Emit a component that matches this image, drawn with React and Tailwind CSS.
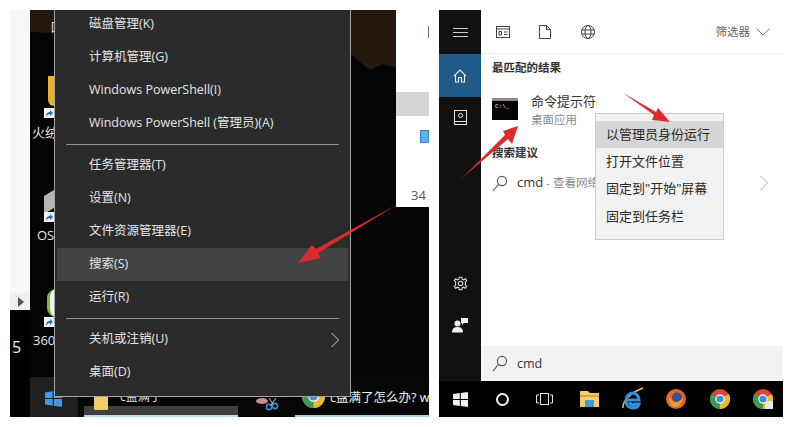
import React from "react";

const font = "font-['Open_Sans','Noto_Sans_CJK_SC',sans-serif]";

function Chrome({ size = 20, className = "" }) {
  return (
    <svg width={size} height={size} viewBox="0 0 24 24" className={className}>
      <circle cx="12" cy="12" r="12" fill="#d9453a" />
      <path d="M12 12 L1.6 6 A12 12 0 0 0 12 24 Z" fill="#3b9c4f" />
      <path d="M12 12 L12 24 A12 12 0 0 0 22.4 6 Z" fill="#e8bb2a" />
      <circle cx="12" cy="12" r="5.6" fill="#fff" />
      <circle cx="12" cy="12" r="4.3" fill="#4a88e0" />
    </svg>
  );
}

function Shortcut() {
  return (
    <svg width="10" height="10" viewBox="0 0 10 10">
      <rect width="10" height="10" fill="#f0f0f0" />
      <path d="M2 8.5 C2 5 4 4 6 4 L6 2 L9 5 L6 8 L6 6 C4.5 6 3 7 2 8.5Z" fill="#2a6fb5" />
    </svg>
  );
}

function Search({ className = "" }) {
  return (
    <svg width="16" height="17" viewBox="0 0 16 17" fill="none" stroke="#555" strokeWidth="1.1" className={className}>
      <circle cx="10" cy="6" r="4.6" />
      <path d="M6.6 9.4 L1 16" />
    </svg>
  );
}

function Chevron() {
  return (
    <svg width="10" height="16" viewBox="0 0 10 16" fill="none" stroke="currentColor" strokeWidth="1">
      <path d="M1.5 1 L8.5 8 L1.5 15" />
    </svg>
  );
}

const menuA = ["磁盘管理(K)", "计算机管理(G)", "Windows PowerShell(I)", "Windows PowerShell (管理员)(A)"];
const menuB = ["任务管理器(T)", "设置(N)", "文件资源管理器(E)", "搜索(S)", "运行(R)"];

function MenuItem({ label, hover, arrow }) {
  return (
    <div className={`h-[33px] shrink-0 flex items-center justify-between pl-[32px] pr-[8px] mx-[2px] text-[12.5px] text-[#e4e4e4] ${hover ? "bg-[#424242]" : ""}`}>
      <span>{label}</span>
      {arrow && <span className="text-[#cfcfcf]"><Chevron /></span>}
    </div>
  );
}

function Sep() {
  return (
    <div className="h-[9px] shrink-0 flex items-center px-[11px]">
      <div className="h-px w-full bg-[#8f8f8f]" />
    </div>
  );
}

function WinMenu() {
  return (
    <div className="absolute left-[44px] top-0 w-[297px] h-[387px] bg-[#2b2b2b] border-x border-b border-[#a3a3a3] overflow-hidden">
      <div className="flex flex-col -mt-[2px]">
        {menuA.map((m) => <MenuItem key={m} label={m} />)}
        <Sep />
        {menuB.map((m) => <MenuItem key={m} label={m} hover={m === "搜索(S)"} />)}
        <Sep />
        <MenuItem label="关机或注销(U)" arrow />
        <MenuItem label="桌面(D)" />
      </div>
    </div>
  );
}

function DesktopIcons() {
  return (
    <>
      <span className="absolute left-[21px] top-[12px] text-[12px] text-[#e8e8e8] leading-none">回</span>
      <div className="absolute left-[18px] top-[66px] w-[7px] h-[30px] bg-[#eeb02c] rounded-bl-[6px]" />
      <div className="absolute left-[14px] top-[98px]"><Shortcut /></div>
      <span className="absolute left-[2px] top-[113px] text-[13px] leading-[18px] text-[#e8e8e8] whitespace-nowrap">火绒</span>
      <div className="absolute left-[14px] top-[183px] w-[10px] h-[18px] bg-[#b5b5b5] skew-y-[-30deg]" />
      <div className="absolute left-[14px] top-[202px]"><Shortcut /></div>
      <span className="absolute left-[7px] top-[216px] text-[13px] leading-[18px] text-[#e8e8e8]">OS</span>
      <div className="absolute left-[17px] top-[279px] w-[18px] h-[28px] rounded-full bg-[#f2f2f2] border-l-[3px] border-[#7bb93a]" />
      <div className="absolute left-[14px] top-[307px]"><Shortcut /></div>
      <span className="absolute left-[3px] top-[321px] text-[13px] leading-[18px] text-[#e8e8e8]">360</span>
    </>
  );
}

function LeftTaskbar() {
  return (
    <div className="h-[40px] shrink-0 flex bg-[#060606]">
      <div className="w-[48px] bg-[#202020] flex pl-[15px] pt-[13px]">
        <svg width="17" height="17" viewBox="0 0 17 17">
          <path d="M0 2.5 L7.7 1.2 V8 H0Z M8.8 1 L17 0 V8 H8.8Z M0 9 H7.7 V15.6 L0 14.5Z M8.8 9 H17 V17 L8.8 15.8Z" fill="#3f9be0" />
        </svg>
      </div>
      <div className="relative w-[154px] ml-[6px] flex flex-col">
        <div className="h-[29px] flex items-end pl-[36px] text-[12px] text-[#dcdcdc] leading-[18px]">
          <span>c盘满了</span>
        </div>
        <div className="h-[9px] bg-[#3f3f3f]" />
        <div className="h-[2px] bg-[#b5dcec]" />
        <div className="absolute left-[10px] top-[18px] w-[14px] h-[15px] bg-[#f3cb67] rounded-[1px]" />
      </div>
      <div className="w-[57px] pl-[17px] pt-[20px]">
        <svg width="24" height="14" viewBox="0 0 24 14" fill="none">
          <ellipse cx="7" cy="4" rx="6" ry="3" fill="#c98f8f" />
          <circle cx="14" cy="10" r="2.6" stroke="#3f86c9" strokeWidth="1.6" />
          <circle cx="20" cy="9" r="2.6" stroke="#3f86c9" strokeWidth="1.6" />
          <path d="M16 8 L21 1 M18 7 L14 1" stroke="#c5c5c5" />
        </svg>
      </div>
      <div className="flex-1 flex flex-col min-w-0">
        <div className="h-[38px] flex pl-[7px] gap-[5px] overflow-hidden">
          <Chrome size={23} className="mt-[8px] shrink-0" />
          <span className="pt-[12px] text-[12.5px] leading-[18px] text-[#f2f2f2] whitespace-nowrap">c盘满了怎么办? w</span>
        </div>
        <div className="h-[2px] bg-[#a9d3e6]" />
      </div>
    </div>
  );
}

function LeftPanel() {
  return (
    <div className="relative w-[419px] h-[407px] flex shrink-0 overflow-hidden">
      <div className="w-[20px] flex flex-col shrink-0">
        <div className="h-[283px] bg-[#f8f8f8]" />
        <div className="h-[17px] bg-[#efefef] flex items-center pl-[8px]">
          <div className="w-0 h-0 border-y-[5px] border-y-transparent border-l-[6px] border-l-[#555]" />
        </div>
        <div className="flex-1 bg-black pt-[25px] pl-[2px]">
          <span className="text-[16px] leading-[24px] text-[#eee]">5</span>
        </div>
      </div>
      <div className="relative flex-1 flex flex-col bg-black">
        <div className="flex-1 flex min-h-0">
          <div className="relative w-[366px] bg-[#040404]">
            <svg width="366" height="70" viewBox="0 0 366 70" className="block">
              <path d="M0 0 H366 V58 L352 54 L340 60 L325 48 L314 37 L300 36 L180 30 L0 22Z" fill="#241810" />
            </svg>
            <DesktopIcons />
          </div>
          <div className="flex-1 flex flex-col">
            <div className="h-[197px] bg-white flex flex-col">
              <div className="h-[82px] flex justify-end pt-[16px]">
                <div className="w-[1px] h-[12px] bg-[#5a6f85]" />
              </div>
              <div className="h-[24px] bg-[#d4d4d4]" />
              <div className="h-[70px] flex justify-end pt-[14px]">
                <div className="w-[9px] h-[13px] bg-[#5fb0e8] border border-[#3a86c2]" />
              </div>
              <span className="pl-[15px] text-[13px] leading-[18px] text-[#555]">34</span>
            </div>
            <div className="flex-1 bg-[#040404]" />
          </div>
        </div>
        <LeftTaskbar />
      </div>
      <div className="absolute inset-0 pointer-events-none"><WinMenu /></div>
    </div>
  );
}

function SideIcon({ children, active, h = "h-[43px]" }) {
  return <div className={`${h} flex items-center justify-center shrink-0 ${active ? "bg-[#1f5a88]" : ""}`}>{children}</div>;
}

function Sidebar() {
  return (
    <div className="w-[42px] bg-[#111111] flex flex-col">
      <SideIcon h="h-[44px]">
        <svg width="15" height="11" viewBox="0 0 15 11" stroke="#cfcfcf" strokeWidth="1">
          <path d="M0 1.5H15M0 5.5H15M0 9.5H15" />
        </svg>
      </SideIcon>
      <SideIcon active>
        <svg width="14" height="14" viewBox="0 0 14 14" fill="none" stroke="#f0f0f0" strokeWidth="1.1">
          <path d="M1 7 L7 1 L13 7 M2.5 6 V13 H5.5 V8.5 H8.5 V13 H11.5 V6" />
        </svg>
      </SideIcon>
      <SideIcon h="h-[40px]">
        <svg width="13" height="15" viewBox="0 0 13 15" fill="none" stroke="#e6e6e6" strokeWidth="1">
          <rect x="0.5" y="0.5" width="12" height="14" />
          <path d="M0.5 11.5 H12.5" />
          <circle cx="6.5" cy="5.5" r="2" />
        </svg>
      </SideIcon>
      <div className="flex-1" />
      <SideIcon>
        <svg width="15" height="15" viewBox="0 0 24 24" fill="none" stroke="#dcdcdc" strokeWidth="1.7">
          <circle cx="12" cy="12" r="3.6" />
          <path d="M10 2 H14 L14.6 5 L17.2 6.1 L19.8 4.4 L22 7.5 L19.6 9.4 L20 12 L19.6 14.6 L22 16.5 L19.8 19.6 L17.2 17.9 L14.6 19 L14 22 H10 L9.4 19 L6.8 17.9 L4.2 19.6 L2 16.5 L4.4 14.6 L4 12 L4.4 9.4 L2 7.5 L4.2 4.4 L6.8 6.1 L9.4 5Z" />
        </svg>
      </SideIcon>
      <SideIcon h="h-[40px]">
        <svg width="16" height="16" viewBox="0 0 16 16" fill="#f0f0f0">
          <circle cx="5.5" cy="6.5" r="3" />
          <path d="M0 15.5 C0 11 3 10 5.5 10 C8 10 11 11 11 15.5Z" />
          <path d="M9 1 H16 V6 H12 L10 8 V6 H9Z" />
        </svg>
      </SideIcon>
      <div className="h-[36px]" />
    </div>
  );
}

function SearchTop() {
  return (
    <div className="h-[44px] shrink-0 flex items-center border-b border-[#f0f0f0] pl-[15px] pr-[13px]">
      <svg width="14" height="12" viewBox="0 0 14 12" fill="none" stroke="#444" strokeWidth="1">
        <rect x="0.5" y="0.5" width="13" height="11" />
        <path d="M0.5 3 H13.5 M3 5.5 V9 H5.5 V5.5Z M8 6 H11.5 M8 8.5 H11.5" />
      </svg>
      <svg width="12" height="14" viewBox="0 0 12 14" fill="none" stroke="#444" strokeWidth="1" className="ml-[29px]">
        <path d="M0.5 0.5 H7.5 L11.5 4.5 V13.5 H0.5Z M7.5 0.5 V4.5 H11.5" />
      </svg>
      <svg width="14" height="14" viewBox="0 0 14 14" fill="none" stroke="#444" strokeWidth="1" className="ml-[30px]">
        <circle cx="7" cy="7" r="6.5" />
        <ellipse cx="7" cy="7" rx="3" ry="6.5" />
        <path d="M0.5 5 H13.5 M0.5 9 H13.5" />
      </svg>
      <span className="ml-auto text-[11.5px] text-[#666]">筛选器</span>
      <svg width="14" height="8" viewBox="0 0 14 8" fill="none" stroke="#777" strokeWidth="1" className="ml-[6px]">
        <path d="M0.5 0.5 L7 7 L13.5 0.5" />
      </svg>
    </div>
  );
}

function Results() {
  return (
    <div className="flex-1 flex flex-col pl-[11px] pr-[14px] pt-[5px]">
      <div className="text-[11.5px] font-bold leading-[17px] text-[#333]">最匹配的结果</div>
      <div className="flex mt-[16px] h-[37px]">
        <div className="w-[26px] h-[22px] mt-[6px] bg-[#050505] border-t-[3px] border-[#8a8a8a] shrink-0 pl-[3px] pt-[2px]">
          <span className="block text-[6px] leading-[7px] text-[#e8e8e8] font-['Liberation_Mono',monospace]">C:\_</span>
        </div>
        <div className="ml-[13px] flex flex-col">
          <span className="text-[13px] leading-[19px] text-[#333]">命令提示符</span>
          <span className="text-[11.5px] leading-[17px] text-[#8a8a8a]">桌面应用</span>
        </div>
      </div>
      <div className="mt-[15px] text-[11.5px] font-bold leading-[17px] text-[#333]">搜索建议</div>
      <div className="flex items-center mt-[12px] h-[20px]">
        <Search />
        <span className="ml-[9px] text-[13px] text-[#333]">cmd</span>
        <span className="ml-[3px] w-[49px] overflow-hidden text-[11.5px] text-[#888] whitespace-nowrap">- 查看网络搜索结果</span>
        <span className="ml-auto text-[#aaa]"><Chevron /></span>
      </div>
    </div>
  );
}

function ContextMenu() {
  const items = ["以管理员身份运行", "打开文件位置", "固定到\"开始\"屏幕", "固定到任务栏"];
  return (
    <div className="absolute left-[156px] top-[103px] w-[129px] h-[127px] bg-[#f2f2f2] border border-[#cdcdcd] pt-[7px] flex flex-col">
      {items.map((t, i) => (
        <div key={t} className={`h-[27.3px] flex items-center pl-[10px] text-[13px] text-[#2a2a2a] whitespace-nowrap ${i === 0 ? "bg-[#d6d6d6]" : ""}`}>{t}</div>
      ))}
    </div>
  );
}

function RightTaskbar() {
  return (
    <div className="h-[36px] shrink-0 bg-black flex items-center pl-[14px]">
      <svg width="15" height="15" viewBox="0 0 15 15" fill="#f2f2f2">
        <path d="M0 2 L6.8 1 V7 H0Z M7.8 0.9 L15 0 V7 H7.8Z M0 8 H6.8 V14 L0 13Z M7.8 8 H15 V15 L7.8 14Z" />
      </svg>
      <div className="ml-[28px] w-[13px] h-[13px] rounded-full border-[2px] border-[#f2f2f2]" />
      <svg width="17" height="12" viewBox="0 0 17 12" fill="none" stroke="#e8e8e8" strokeWidth="1" className="ml-[27px]">
        <rect x="4.5" y="0.5" width="8" height="11" />
        <path d="M3 2 H0.5 V10 H3 M14 2 H16.5 V10 H14" />
      </svg>
      <svg width="19" height="16" viewBox="0 0 19 16" className="ml-[27px]">
        <path d="M0 0 H8 L10 2 H19 V16 H0Z" fill="#f3cd6c" />
        <rect x="0" y="4" width="19" height="2" fill="#d9a93f" />
        <rect x="5" y="9" width="9" height="7" fill="#3d9bd8" />
      </svg>
      <svg width="24" height="24" viewBox="0 0 24 24" fill="none" className="ml-[22px]">
        <path d="M2 21 C1 15 10 5 22 1" stroke="#e8c14a" strokeWidth="1.5" />
        <path d="M6 13 H18 C18 8 14 6 11.5 6 C8 6 5 9 5 14 C5 19 9 21 12 21 C15 21 17 20 18 17 H14 C13 18.5 9 18 9 15" stroke="#2f93dc" strokeWidth="3" />
      </svg>
      <svg width="20" height="20" viewBox="0 0 20 20" className="ml-[21px]">
        <circle cx="10" cy="10" r="10" fill="#e5642a" />
        <circle cx="11" cy="8.5" r="5" fill="#3a4f8f" />
        <path d="M3 6 C5 15 13 15 17 8 C17 14 13 18 9 18 C5 18 2 12 3 6Z" fill="#f09a2e" />
      </svg>
      <Chrome size={20} className="ml-[24px]" />
      <div className="relative ml-[23px] w-[20px] h-[20px]">
        <Chrome size={20} />
        <div className="absolute right-0 bottom-0 w-[8px] h-[8px] bg-[#e8e8e8] rounded-tl-[4px]" />
      </div>
    </div>
  );
}

function RightPanel() {
  return (
    <div className="relative w-[344px] h-[407px] flex flex-col shrink-0">
      <div className="flex-1 flex min-h-0">
        <Sidebar />
        <div className="flex-1 flex flex-col bg-white min-w-0">
          <SearchTop />
          <Results />
          <div className="h-[35px] shrink-0 bg-[#f2f2f2] flex items-center pl-[11px]">
            <Search />
            <span className="ml-[9px] pt-[2px] text-[12.5px] text-[#333]">cmd</span>
          </div>
        </div>
      </div>
      <RightTaskbar />
      <ContextMenu />
    </div>
  );
}

export default function App() {
  return (
    <div className={`relative w-[794px] h-[427px] bg-white flex gap-[10px] pt-[10px] pl-[10px] overflow-hidden ${font}`}>
      <LeftPanel />
      <RightPanel />
      <svg width="794" height="427" viewBox="0 0 794 427" className="absolute left-0 top-0 pointer-events-none">
        <path d="M398 204 L318.3 253 L320.5 258 L298 263 L312 245 L316 249Z" fill="#dc2b2e" />
        <path d="M461 179 L505 135 L503 131 L518 126 L512 144 L508 139Z" fill="#dc2b2e" />
        <path d="M623 93 L656 112 L658 108 L670 122 L652 120 L654 115Z" fill="#dc2b2e" />
      </svg>
    </div>
  );
}
